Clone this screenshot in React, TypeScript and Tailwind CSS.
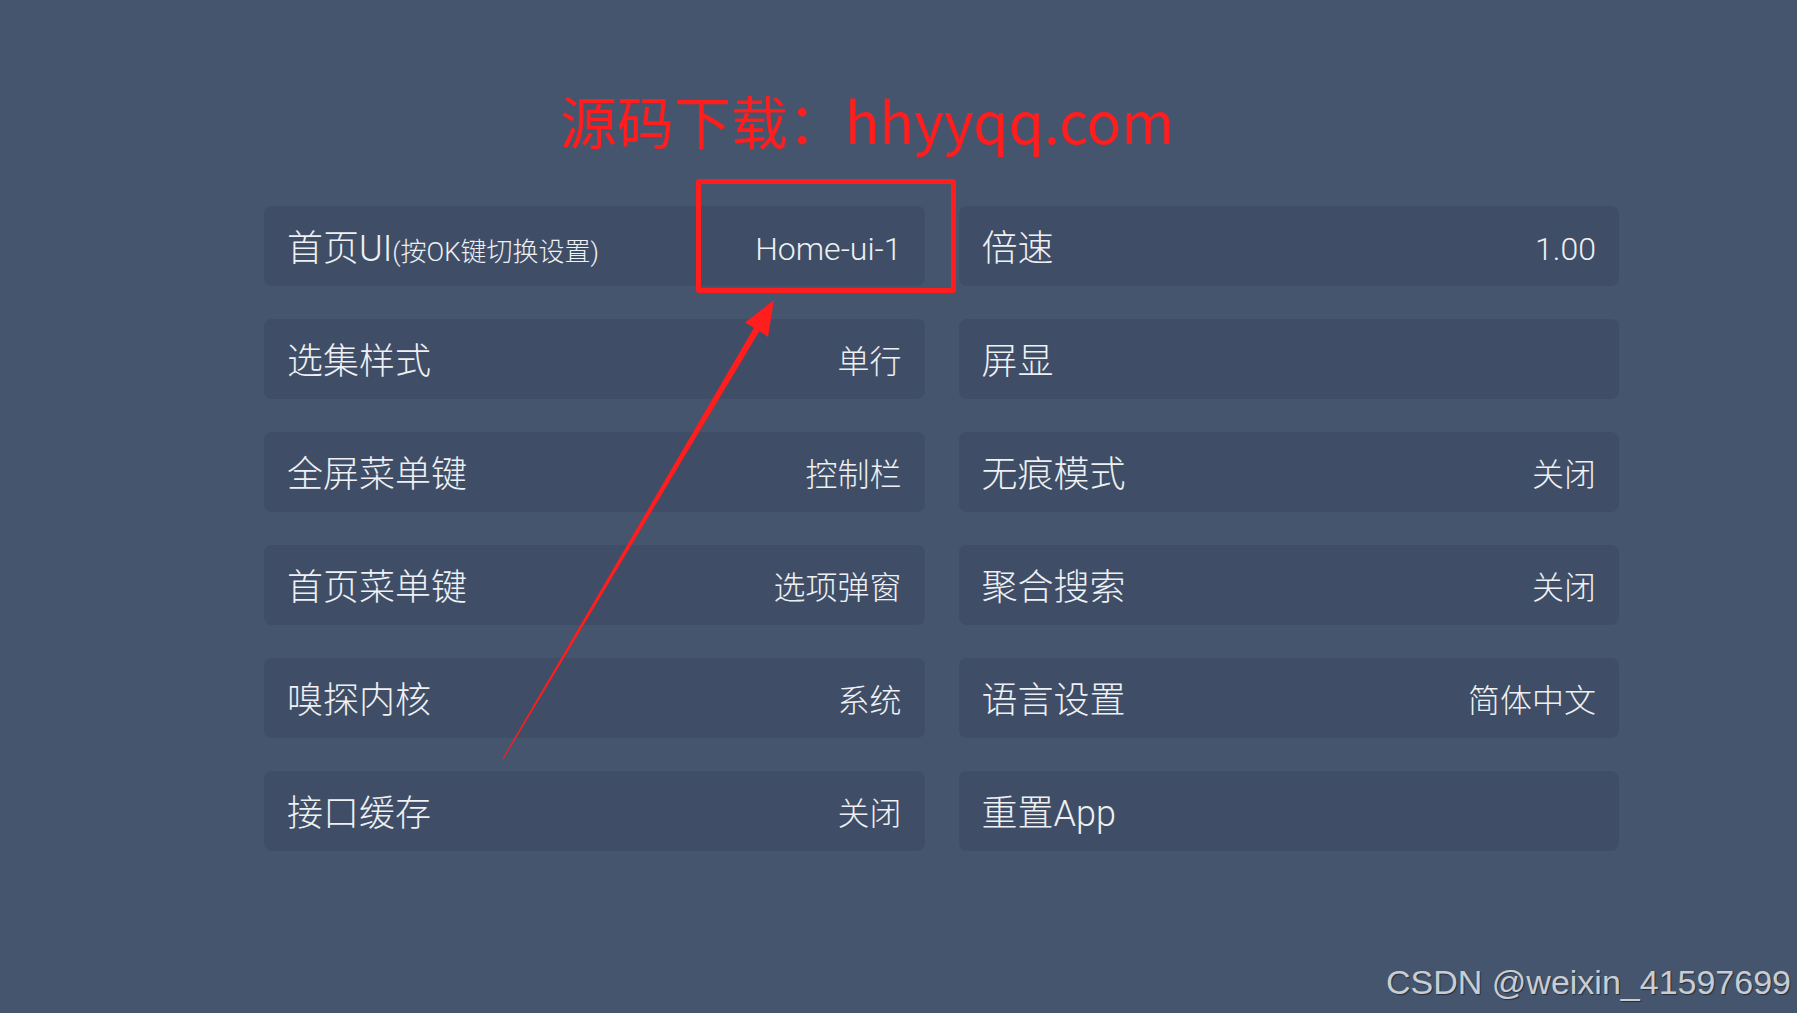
import React from 'react';

type Item = { label: string; hint?: string; value?: string };

const left: Item[] = [
  { label: '首页UI', hint: '(按OK键切换设置)', value: 'Home-ui-1' },
  { label: '选集样式', value: '单行' },
  { label: '全屏菜单键', value: '控制栏' },
  { label: '首页菜单键', value: '选项弹窗' },
  { label: '嗅探内核', value: '系统' },
  { label: '接口缓存', value: '关闭' },
];

const right: Item[] = [
  { label: '倍速', value: '1.00' },
  { label: '屏显' },
  { label: '无痕模式', value: '关闭' },
  { label: '聚合搜索', value: '关闭' },
  { label: '语言设置', value: '简体中文' },
  { label: '重置App' },
];

function SettingRow({ item }: { item: Item }) {
  return (
    <div className="flex h-[80px] items-center justify-between rounded-[8px] bg-[#3f4e66] px-[23px] pt-[6px] font-light text-[#eef0f3]">
      <div className="flex items-baseline">
        <span className="text-[36px] leading-none">{item.label}</span>
        {item.hint && <span className="text-[26px] leading-none">{item.hint}</span>}
      </div>
      {item.value && <span className="text-[32px] leading-none">{item.value}</span>}
    </div>
  );
}

export default function App() {
  // interleave columns so grid flows row by row
  const rows = left.flatMap((l, i) => [l, right[i]]);

  return (
    <div
      className="relative h-[1013px] w-full overflow-hidden bg-[#44556d] pt-[91px]"
      style={{ fontFamily: 'Roboto, "Noto Sans CJK SC", sans-serif' }}
    >
      <h1
        className="pl-[560px] text-[57px] leading-[56px] font-normal text-[#ff1d1d]"
        style={{ fontFamily: '"Noto Sans CJK SC", sans-serif' }}
      >
        源码下载：hhyyqq.com
      </h1>

      <div className="mt-[59px] ml-[264px] grid w-[1355px] grid-cols-2 gap-x-[34px] gap-y-[33px]">
        {rows.map((item, i) => (
          <SettingRow key={i} item={item} />
        ))}
      </div>

      {/* annotation: highlight box */}
      <div className="absolute left-[696px] top-[179px] h-[114px] w-[260px] rounded-[3px] border-[5px] border-[#ff1d1d]" />

      {/* annotation: arrow */}
      <svg className="pointer-events-none absolute inset-0" width="1797" height="1013">
        <polygon
          fill="#ff1d1d"
          points="774,300 768,337 759.5,331 503.5,759 502.5,758.5 754,327.8 745,322.5"
        />
      </svg>

      <div
        className="absolute right-[6px] bottom-[14px] text-[34px] leading-none text-[#c9cdd3] [text-shadow:1px_1px_1px_rgba(0,0,0,0.45)]"
        style={{ fontFamily: '"Liberation Sans", Arial, sans-serif' }}
      >
        CSDN @weixin_41597699
      </div>
    </div>
  );
}
